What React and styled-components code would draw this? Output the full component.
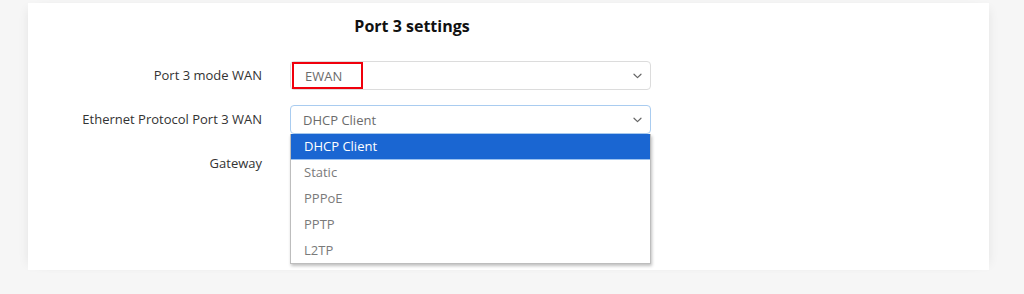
import React from "react";
import styled, { createGlobalStyle } from "styled-components";

const GlobalStyle = createGlobalStyle`
  html, body {
    margin: 0;
    padding: 0;
    background: #f6f6f6;
    font-family: "Open Sans", "Noto Sans", Arial, sans-serif;
  }
`;

const options = ["DHCP Client", "Static", "PPPoE", "PPTP", "L2TP"];

const Chevron = () => (
  <svg width="9" height="6" viewBox="0 0 9 6" fill="none">
    <path d="M1 1.2l3.5 3.4 3.5-3.4" stroke="#666" strokeWidth="1.2" strokeLinecap="round" strokeLinejoin="round" />
  </svg>
);

const App = () => {
  return (
    <Page>
      <GlobalStyle />
      <Card>
        <Title>Port 3 settings</Title>
        <Form>
          <Label>Port 3 mode WAN</Label>
          <Select>
            <Marked>EWAN</Marked>
            <Arrow>
              <Chevron />
            </Arrow>
          </Select>

          <Label>Ethernet Protocol Port 3 WAN</Label>
          <Field>
            <Select focused>
              <Value>DHCP Client</Value>
              <Arrow>
                <Chevron />
              </Arrow>
            </Select>
            <Menu>
              {options.map((o, i) => (
                <Option key={o} active={i === 0}>
                  {o}
                </Option>
              ))}
            </Menu>
          </Field>

          <Label>Gateway</Label>
          <Select />
        </Form>
      </Card>
    </Page>
  );
};

const Page = styled.div`
  height: 294px;
  overflow: hidden;
  padding: 3px 35px 0 28px;
  box-sizing: border-box;
`;

const Card = styled.div`
  background: #fff;
  height: 267px;
  overflow: hidden;
  box-shadow: -6px 0 10px -6px rgba(0, 0, 0, 0.08), 6px 0 10px -6px rgba(0, 0, 0, 0.08);
`;

const Title = styled.h2`
  margin: 0;
  padding: 13px 0 0 0;
  width: 768px;
  text-align: center;
  font-size: 16px;
  font-weight: 700;
  color: #111;
  line-height: 20px;
`;

const Form = styled.div`
  display: grid;
  grid-template-columns: 234px 361px;
  column-gap: 28px;
  row-gap: 15px;
  margin-top: 25px;
  align-items: start;
`;

const Label = styled.div`
  text-align: right;
  font-size: 13px;
  color: #333;
  line-height: 29px;
`;

const Field = styled.div`
  position: relative;
`;

const Select = styled.div`
  position: relative;
  height: 29px;
  box-sizing: border-box;
  border: 1px solid ${(p) => (p.focused ? "#a9ccf0" : "#dcdcdc")};
  border-radius: 4px;
  display: flex;
  align-items: center;
  padding-left: 12px;
  font-size: 13px;
  color: #6b6b6b;
`;

const Value = styled.span``;

const Marked = styled.span`
  margin-left: -11px;
  padding: 0 0 0 11px;
  width: 71px;
  box-sizing: border-box;
  height: 27px;
  display: flex;
  align-items: center;
  border: 2px solid #f0000c;
`;

const Arrow = styled.span`
  position: absolute;
  right: 8px;
  top: 50%;
  transform: translateY(-50%);
  display: flex;
`;

const Menu = styled.div`
  position: absolute;
  top: 29px;
  left: 0;
  right: 0;
  background: #fff;
  border: 1px solid #bdbdbd;
  border-top: none;
  box-shadow: 1px 2px 3px rgba(0, 0, 0, 0.25);
  z-index: 2;
`;

const Option = styled.div`
  height: 25.8px;
  display: flex;
  align-items: center;
  padding-left: 13px;
  font-size: 13px;
  color: ${(p) => (p.active ? "#fff" : "#7a7a7a")};
  background: ${(p) => (p.active ? "#1a66d2" : "transparent")};
  border-bottom: 1px solid ${(p) => (p.active ? "#9cc2f0" : "transparent")};
  box-sizing: border-box;
`;

export default App;
